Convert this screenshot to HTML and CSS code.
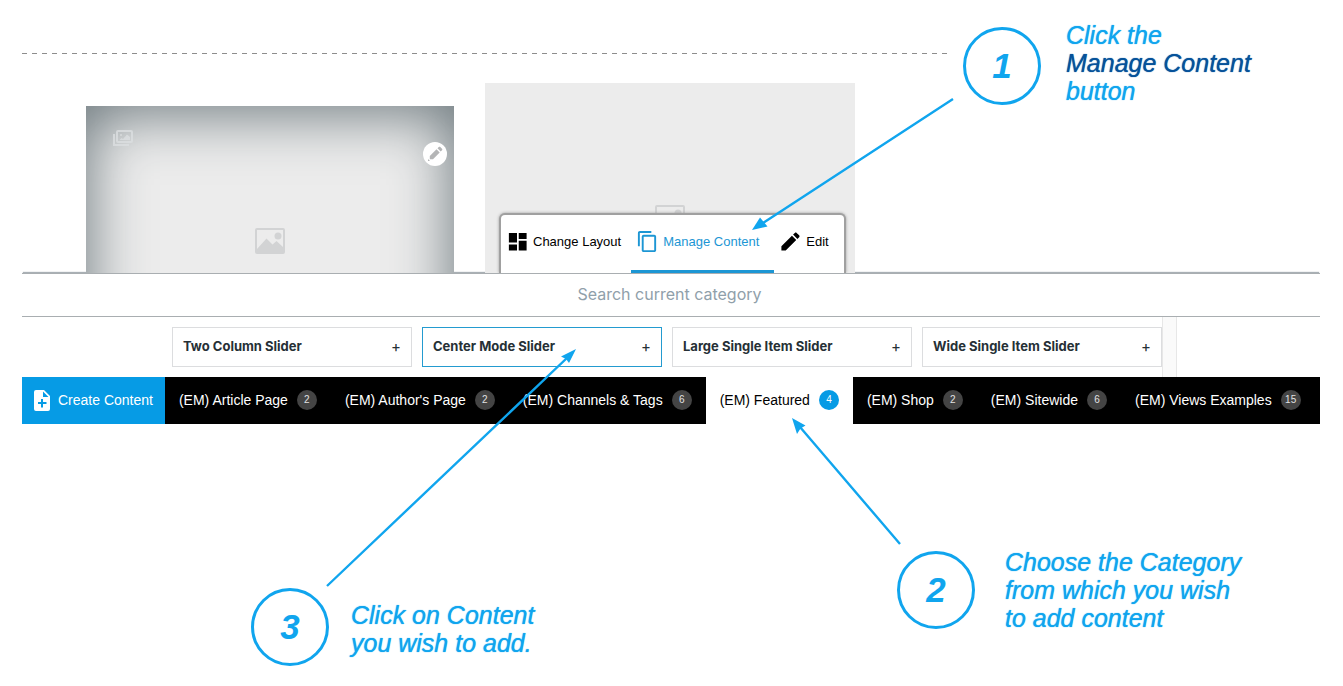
FILE: index.html
```html
<!DOCTYPE html>
<html lang="en">
<head>
<meta charset="utf-8">
<title>Manage Content</title>
<link rel="stylesheet" href="styles.css">
</head>
<body>
<main class="app">
  <section class="stage">
    <div class="divider"></div>
    <div class="cards">
      <article class="card card-selected">
        <svg class="gallery-icon" viewBox="0 0 20 16" aria-hidden="true"><rect x="4" y="1" width="15" height="11" rx="1"/><path d="M1 4v11h15"/><path class="solid" d="M6.500 10l2-2 1.500 1 4-4.500L17 7v3z"/><circle class="solid" cx="8" cy="5" r="1"/></svg>
        <button class="card-edit" aria-label="Edit card"><svg viewBox="0 0 16 16"><path d="M2.800 10L9.500 3.300 12.700 6.500 6 13.200 2.800 13.200zM10.500 2.300l1.300-1.300c.5-.5 1-.5 1.500 0l1.700 1.700c.5.5.5 1 0 1.500L13.700 5.500zM1 13l2 2H1z"/></svg></button>
        <svg class="picture-icon" viewBox="0 0 30 26" aria-hidden="true"><path fill-rule="evenodd" d="M2 0h26a2 2 0 0 1 2 2v22a2 2 0 0 1-2 2H2a2 2 0 0 1-2-2V2a2 2 0 0 1 2-2zM2 2v19L11.500 10.500l6 6 4-3.500L28 19V2z"/><circle cx="23" cy="8" r="3.500"/></svg>
      </article>
      <article class="card">
        <svg class="picture-icon" viewBox="0 0 30 26" aria-hidden="true"><path fill-rule="evenodd" d="M2 0h26a2 2 0 0 1 2 2v22a2 2 0 0 1-2 2H2a2 2 0 0 1-2-2V2a2 2 0 0 1 2-2zM2 2v19L11.500 10.500l6 6 4-3.500L28 19V2z"/><circle cx="23" cy="8" r="3.500"/></svg>
      </article>
    </div>
    <nav class="toolbar" aria-label="Block tools">
      <button class="tool"><svg class="tool-icon" viewBox="0 0 24 24"><path d="M3 3h8.500v10H3zM3 15h8.500v6.500H3zM13.300 3H21.500v6.500h-8.200zM13.300 11.200h8.200v10.300h-8.200z"/></svg>Change Layout</button>
      <button class="tool tool-active"><svg class="tool-icon" viewBox="0 0 24 24"><path d="M16 1H4c-1.100 0-2 .9-2 2v14h2V3h12V1zm3 4H8c-1.100 0-2 .9-2 2v14c0 1.100.9 2 2 2h11c1.100 0 2-.9 2-2V7c0-1.100-.9-2-2-2zm0 16H8V7h11v14z"/></svg>Manage Content</button>
      <button class="tool"><svg class="tool-icon" viewBox="0 0 24 24"><path d="M2.500 17v4.500H7L18 10.500 13.500 6zM21 7.500c.6-.6.600-1.300 0-1.900l-2.600-2.600c-.6-.6-1.300-.6-1.900 0L14.700 4.800l4.500 4.500z"/></svg>Edit</button>
    </nav>
  </section>

  <input class="search" type="text" placeholder="Search current category" aria-label="Search current category">

  <section class="results">
    <div class="result-list">
      <button class="result">Two Column Slider<span class="plus">+</span></button>
      <button class="result result-active">Center Mode Slider<span class="plus">+</span></button>
      <button class="result">Large Single Item Slider<span class="plus">+</span></button>
      <button class="result">Wide Single Item Slider<span class="plus">+</span></button>
    </div>
    <div class="scroll-track"></div>
  </section>

  <nav class="categories" aria-label="Categories">
    <button class="create"><svg class="create-icon" viewBox="0 0 16 21"><path fill-rule="evenodd" d="M2 0h8l6 6v13a2 2 0 0 1-2 2H2a2 2 0 0 1-2-2V2a2 2 0 0 1 2-2zM9 1.500V7h5.500zM7 9v3H4v2h3v3.500h2V14h3.500v-2H9V9z"/></svg>Create Content</button>
    <button class="category">(EM) Article Page<span class="badge">2</span></button>
    <button class="category">(EM) Author's Page<span class="badge">2</span></button>
    <button class="category">(EM) Channels &amp; Tags<span class="badge">6</span></button>
    <button class="category category-active">(EM) Featured<span class="badge">4</span></button>
    <button class="category">(EM) Shop<span class="badge">2</span></button>
    <button class="category">(EM) Sitewide<span class="badge">6</span></button>
    <button class="category">(EM) Views Examples<span class="badge">15</span></button>
  </nav>
</main>

<div class="guide">
  <svg class="arrows" viewBox="0 0 1343 686" aria-hidden="true">
    <path class="shaft" d="M953 99L763 223M900 544L800 427M327 586L568 357"/>
    <path d="M752 230l8-12.500 2.500 3 5 6z"/>
    <path d="M792 418l13.500 7.500-5 3-3.500 5.500z"/>
    <path d="M576 349l-7 14-3-4-5-2.500z"/>
  </svg>
  <div class="step step-one"><span class="number">1</span><p class="hint">Click the<br><strong>Manage Content</strong><br>button</p></div>
  <div class="step step-two"><span class="number">2</span><p class="hint">Choose the Category<br>from which you wish<br>to add content</p></div>
  <div class="step step-three"><span class="number">3</span><p class="hint">Click on Content<br>you wish to add.</p></div>
</div>
</body>
</html>
```

FILE: styles.css
```css
* { box-sizing: border-box; }

body {
  margin: 0;
  background: #fff;
  color: #000;
  font-family: "Liberation Sans", Arial, sans-serif;
}

button {
  margin: 0;
  padding: 0;
  border: 0;
  background: none;
  color: inherit;
  font: inherit;
  white-space: nowrap;
  cursor: pointer;
}

svg { display: block; flex: none; fill: currentColor; }

.app { padding: 0 23px 0 22px; }

/* Page preview behind the toolbar */
.stage {
  position: relative;
  height: 273px;
  padding-top: 53px;
}

.divider {
  width: 926px;
  height: 1px;
  background: repeating-linear-gradient(90deg, #8d8d8d 0 5px, transparent 5px 10px);
}

.cards {
  display: flex;
  gap: 31px;
  height: 219px;
  padding: 29px 0 0 64px;
}

.card {
  position: relative;
  display: flex;
  justify-content: center;
  width: 370px;
  padding-top: 122px;
  background: #ececec;
  overflow: hidden;
}

.card-selected {
  width: 368px;
  margin-top: 23px;
}

/* The frame runs on below the visible part of the card */
.card-selected::before {
  content: "";
  position: absolute;
  inset: 0 0 -100px;
  box-shadow: inset 0 5px 60px 2px #6a767b;
}

.picture-icon { position: relative; width: 30px; height: 26px; color: #d2d3d4; }

.gallery-icon {
  position: absolute;
  top: 24px;
  left: 27px;
  width: 20px;
  height: 16px;
  fill: none;
  stroke: #dcdfe1;
  stroke-width: 2;
  opacity: .8;
}

.gallery-icon .solid { fill: #dcdfe1; stroke: none; }

.gallery-icon, .card-edit { z-index: 1; }

.card-edit {
  position: absolute;
  top: 36px;
  right: 7px;
  display: grid;
  place-items: center;
  width: 24px;
  height: 24px;
  border-radius: 50%;
  background: #fff;
  color: #b4b5b6;
}

.card-edit svg { width: 16px; height: 16px; }

.toolbar {
  position: absolute;
  bottom: 0;
  left: 477px;
  z-index: 1;
  display: flex;
  height: 60px;
  padding-right: 5px;
  border: 2px solid #a0a0a0;
  border-bottom: 0;
  border-radius: 6px 6px 0 0;
  background: #fff;
  box-shadow: 0 0 3px #999;
  clip-path: inset(-4px -4px 0);
}

.tool {
  display: flex;
  align-items: center;
  gap: 4px;
  padding: 0 10px 3px 5px;
  border-bottom: 3px solid transparent;
  font-size: 13px;
}

.tool-icon { width: 23px; height: 23px; }
.tool-active { padding: 0 15px 3px 5px; border-color: #1c96d4; color: #1c96d4; }

.search {
  display: block;
  width: 100%;
  height: 44px;
  padding: 0 3px 2px 0;
  border: solid #a9aeb1;
  border-width: 1px 0;
  border-radius: 0;
  outline: 0;
  background: #fff;
  box-shadow: 0 -2px 1px -1px #a9b0b5;
  font: 16px Inter, sans-serif;
  text-align: center;
  appearance: none;
}

.search::placeholder { color: #90a0aa; opacity: 1; }

.results { display: flex; padding-left: 150px; }

.result-list { display: flex; gap: 10px; padding: 10px 0; }

.result {
  display: flex;
  align-items: center;
  justify-content: space-between;
  width: 240px;
  height: 40px;
  padding: 0 10px 2px;
  border: 1px solid #dcdddf;
  background: #fff;
  color: #263036;
  font: 700 13px Inter, sans-serif;
}

.result-active { border-color: #239bd0; }
.plus { font-size: 15px; font-weight: 400; }

.scroll-track {
  width: 15px;
  border: solid #e7e7e7;
  border-width: 0 1px;
  background: #fafafa;
}

.categories {
  display: flex;
  height: 47px;
  background: #000;
  color: #fff;
  font-size: 14px;
}

.create {
  display: flex;
  align-items: center;
  gap: 8px;
  padding: 0 12px 1px;
  background: #069be5;
}

.create-icon { width: 16px; height: 21px; }

.category {
  display: flex;
  align-items: center;
  gap: 9px;
  padding: 0 14px 1px;
}

.badge {
  width: 20px;
  border-radius: 50%;
  background: #444;
  color: #e2e2e2;
  font-size: 10px;
  line-height: 20px;
  text-align: center;
}

.category-active { background: #fff; color: #000; }
.category-active .badge { background: #069be5; color: #fff; }

/* Walkthrough notes drawn over the interface */
.guide {
  position: absolute;
  top: 0;
  left: 0;
  z-index: 2;
  color: #10a5ee;
  pointer-events: none;
}

.arrows { width: 1343px; height: 686px; }
.shaft { fill: none; stroke: currentColor; stroke-width: 2.400; }

.step {
  position: absolute;
  display: flex;
  align-items: center;
  font-style: italic;
  white-space: nowrap;
}

.step-one { top: 21px; left: 963px; gap: 25px; align-items: flex-end; }
.step-two { top: 548px; left: 897px; gap: 30px; }
.step-three { top: 588px; left: 251px; gap: 22px; }
.step-three .hint { padding-top: 4px; }

.number {
  width: 78px;
  border: 3px solid;
  border-radius: 50%;
  font-size: 35px;
  font-weight: 700;
  line-height: 72px;
  text-align: center;
}

.hint {
  margin: 0;
  font-size: 25px;
  line-height: 28px;
  text-shadow: 0 0 1px currentColor;
}

.hint strong { color: #06529a; font-weight: 400; }
```
